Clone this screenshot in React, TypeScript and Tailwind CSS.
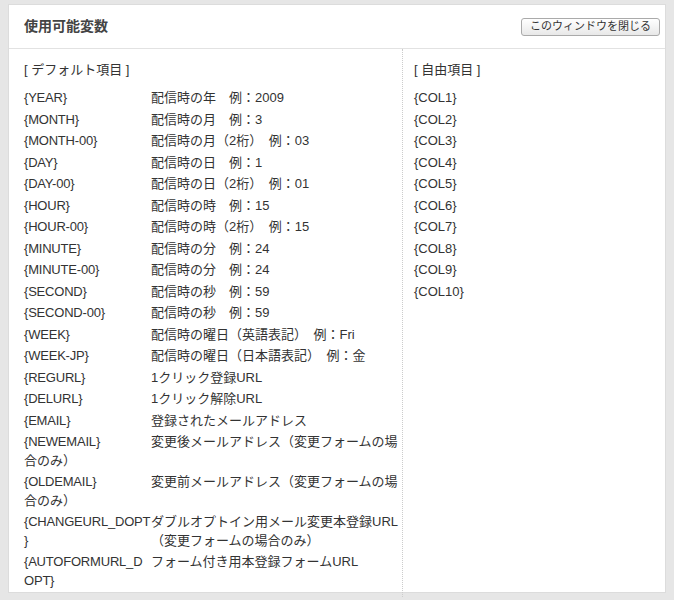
import { Fragment } from "react";

const defaults: [string, string][] = [
  ["{YEAR}", "配信時の年　例：2009"],
  ["{MONTH}", "配信時の月　例：3"],
  ["{MONTH-00}", "配信時の月（2桁）　例：03"],
  ["{DAY}", "配信時の日　例：1"],
  ["{DAY-00}", "配信時の日（2桁）　例：01"],
  ["{HOUR}", "配信時の時　例：15"],
  ["{HOUR-00}", "配信時の時（2桁）　例：15"],
  ["{MINUTE}", "配信時の分　例：24"],
  ["{MINUTE-00}", "配信時の分　例：24"],
  ["{SECOND}", "配信時の秒　例：59"],
  ["{SECOND-00}", "配信時の秒　例：59"],
  ["{WEEK}", "配信時の曜日（英語表記）　例：Fri"],
  ["{WEEK-JP}", "配信時の曜日（日本語表記）　例：金"],
  ["{REGURL}", "1クリック登録URL"],
  ["{DELURL}", "1クリック解除URL"],
  ["{EMAIL}", "登録されたメールアドレス"],
  ["{NEWEMAIL}", "変更後メールアドレス（変更フォームの場合のみ）"],
  ["{OLDEMAIL}", "変更前メールアドレス（変更フォームの場合のみ）"],
  ["{CHANGEURL_DOPT|}", "ダブルオプトイン用メール変更本登録URL（変更フォームの場合のみ）"],
  ["{AUTOFORMURL_D|OPT}", "フォーム付き用本登録フォームURL"],
];

const cols = Array.from({ length: 10 }, (_, i) => `{COL${i + 1}}`);

export default function App() {
  return (
    <div
      className="h-[600px] w-[674px] bg-[#e6e6e6] pt-[4px] px-[8px] text-[13px] text-[#333]"
      style={{ fontFamily: '"Liberation Sans", "Noto Sans CJK JP", sans-serif' }}
    >
      <div className="h-[589px] bg-white border border-[#dcdcdc]">
        {/* Header */}
        <div className="flex items-center justify-between h-[44px] pl-[15px] pr-[5px] border-b border-[#e2e2e2]">
          <h1 className="text-[14px] font-bold text-[#444]">使用可能変数</h1>
          <button className="h-[18px] px-[8px] text-[11px] text-[#333] rounded-[3px] border border-[#aaa] bg-gradient-to-b from-white to-[#e8e8e8] leading-none">
            このウィンドウを閉じる
          </button>
        </div>

        {/* Body */}
        <div className="flex">
          <div className="w-[394px] pl-[15px] pr-[4px] pt-[11px] pb-[4px] border-r border-dotted border-[#ccc]">
            <div className="leading-[19px] mb-[10px]">[ デフォルト項目 ]</div>
            {defaults.map(([k, v]) => (
              <div key={k} className="leading-[18.5px] pb-[3px] flow-root">
                <div className="float-left w-[127px] whitespace-nowrap tracking-[-0.2px]">
                  {k.split("|").map((part, i) => (
                    <Fragment key={i}>
                      {i > 0 && <br />}
                      {part}
                    </Fragment>
                  ))}
                </div>
                {v}
              </div>
            ))}
          </div>
          <div className="flex-1 pl-[11px] pt-[11px]">
            <div className="leading-[19px] mb-[10px]">[ 自由項目 ]</div>
            {cols.map((c) => (
              <div key={c} className="leading-[18.5px] pb-[3px]">
                {c}
              </div>
            ))}
          </div>
        </div>
      </div>
    </div>
  );
}
